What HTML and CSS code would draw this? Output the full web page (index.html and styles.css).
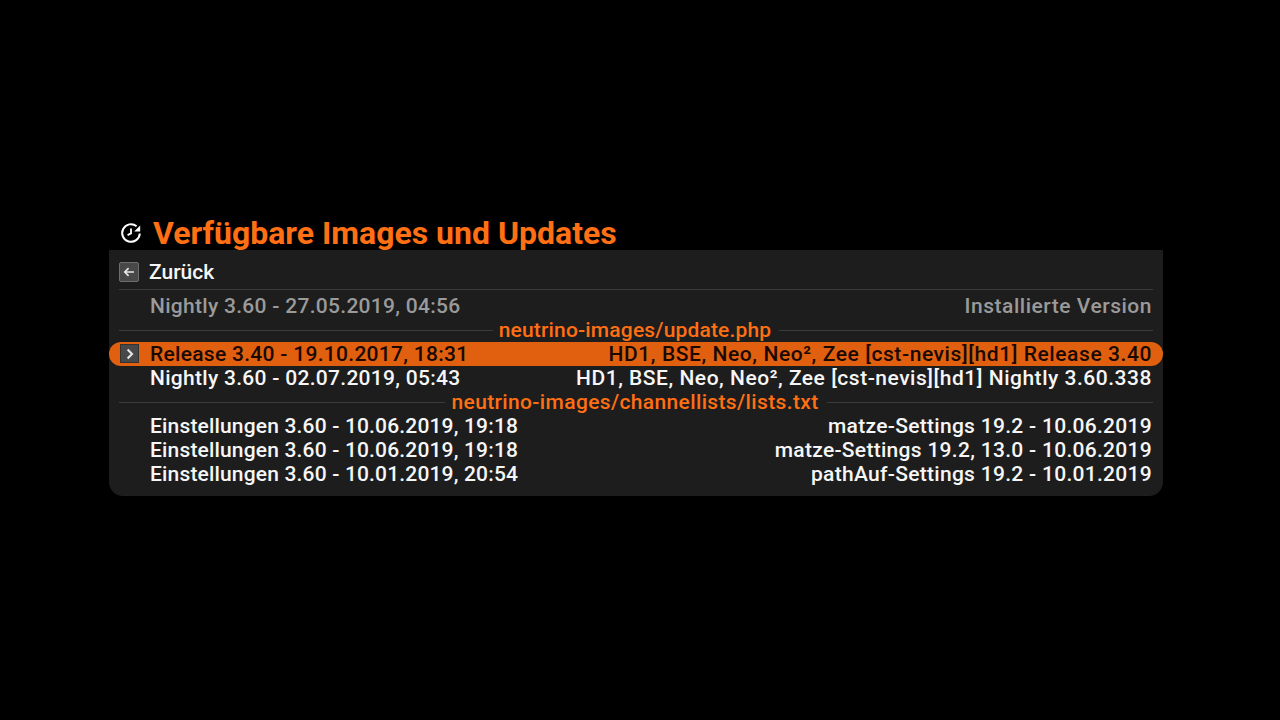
FILE: index.html
```html
<!DOCTYPE html>
<html lang="de">
<head>
<meta charset="utf-8">
<title>Verfügbare Images und Updates</title>
<link rel="stylesheet" href="styles.css">
</head>
<body>
<main class="window">
  <header class="title-bar">
    <svg class="title-icon" width="22" height="22" viewBox="0 0 22 22" fill="none" stroke="#fff" stroke-width="2">
      <path d="M16.6 4.2A8.8 8.8 0 1 0 19.8 11.5"/>
      <path d="M20.2 3.6v6h-6z" fill="#fff" stroke="none"/>
      <path d="M11 6.4v5l-3.4 1.7" stroke-width="1.8"/>
    </svg>
    <h1 class="title">Verfügbare Images und Updates</h1>
  </header>
  <section class="panel">
    <div class="back-row">
      <span class="key">
        <svg width="12" height="12" viewBox="0 0 12 12" fill="none" stroke="#e6e6e6" stroke-width="1.7"><path d="M11 6H1.8M5.6 2.2 1.8 6l3.8 3.8"/></svg>
      </span>
      <span class="back-label">Zurück</span>
    </div>
    <div class="rule"></div>
    <div class="row muted"><span>Nightly 3.60 - 27.05.2019, 04:56</span><span class="wide">Installierte Version</span></div>
    <div class="group"><span class="tight">neutrino-images/update.php</span></div>
    <div class="row selected">
      <span class="key key-selected">
        <svg width="12" height="12" viewBox="0 0 12 12" fill="none" stroke="#e6e6e6" stroke-width="2.1"><path d="M3.6 1.6 8 6l-4.4 4.4"/></svg>
      </span>
      <span>Release 3.40 - 19.10.2017, 18:31</span><span class="wider">HD1, BSE, Neo, Neo², Zee [cst-nevis][hd1] Release 3.40</span>
    </div>
    <div class="row"><span>Nightly 3.60 - 02.07.2019, 05:43</span><span class="wide">HD1, BSE, Neo, Neo², Zee [cst-nevis][hd1] Nightly 3.60.338</span></div>
    <div class="group"><span class="loose">neutrino-images/channellists/lists.txt</span></div>
    <div class="row"><span class="tight">Einstellungen 3.60 - 10.06.2019, 19:18</span><span>matze-Settings 19.2 - 10.06.2019</span></div>
    <div class="row"><span class="tight">Einstellungen 3.60 - 10.06.2019, 19:18</span><span>matze-Settings 19.2, 13.0 - 10.06.2019</span></div>
    <div class="row"><span class="tight">Einstellungen 3.60 - 10.01.2019, 20:54</span><span>pathAuf-Settings 19.2 - 10.01.2019</span></div>
  </section>
</main>
</body>
</html>
```
FILE: styles.css
```css
* { box-sizing: border-box; }
html, body { margin: 0; height: 100%; background: #000; }
body { font-family: Roboto, "Liberation Sans", sans-serif; color: #f6f6f6; overflow: hidden; }
.window { width: 1054px; margin: 215px 0 0 109px; }
.title-bar { height: 35px; display: flex; align-items: center; padding-left: 11px; gap: 11px; }
.title-icon { flex: none; }
.title { margin: 0; font-size: 32px; line-height: 35px; font-weight: 700; color: #ff6f14; letter-spacing: 0; position: relative; top: 1px; }
.panel { background: #1d1d1d; border-radius: 0 0 14px 14px; padding-bottom: 10px; font-size: 21px; font-weight: 500; letter-spacing: 0.29px; }
.back-row { height: 39px; display: flex; align-items: center; padding: 4px 0 0 10px; gap: 10px; }
.back-label { line-height: 24px; letter-spacing: 0; }
.key { width: 20px; height: 20px; flex: none; display: flex; align-items: center; justify-content: center; background: #484848; border: 1px solid #6e6e6e; border-radius: 2px; }
.rule { height: 1px; margin: 0 10px 4px; background: #3c3c3c; }
.row { height: 24px; display: flex; align-items: center; justify-content: space-between; padding: 0 11px 0 41px; line-height: 24px; white-space: nowrap; }
.wide { letter-spacing: 0.52px; }
.wider { letter-spacing: 0.58px; }
.tight { letter-spacing: 0.17px; }
.loose { letter-spacing: 0.36px; }
.muted { color: #9a9a9a; }
.selected { position: relative; background: #e0600f; color: #1a0800; border-radius: 12px; }
.key-selected { position: absolute; left: 11px; top: 2px; width: 19px; height: 19px; border-color: #333; border-radius: 0; }
.group { height: 24px; display: flex; align-items: center; justify-content: center; gap: 6px; margin: 0 10px; color: #ff6f14; line-height: 24px; white-space: nowrap; }
.group span { margin-right: 2px; }
.group::before, .group::after { content: ""; flex: 1; height: 1px; background: #3c3c3c; }
```
